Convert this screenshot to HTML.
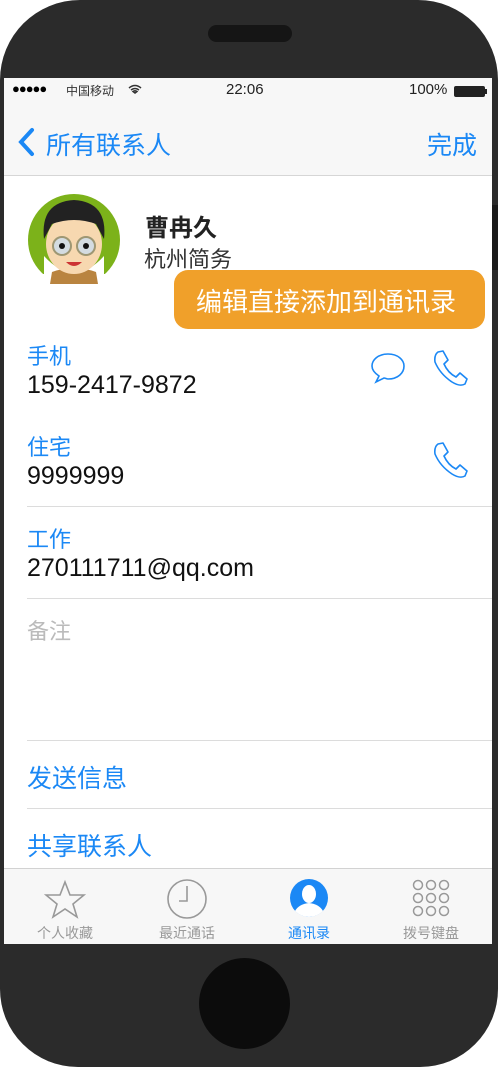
<!DOCTYPE html><html><head><meta charset="utf-8"><style>
*{margin:0;padding:0;box-sizing:border-box}
body{width:498px;height:1067px;background:#fff;position:relative;overflow:hidden;font-family:"Liberation Sans","Noto Sans CJK SC",sans-serif}
.phone{position:absolute;left:0;top:0;width:498px;height:1067px;background:#2b2b2b;border-radius:80px 80px 78px 78px}
.side{position:absolute;right:0;top:205px;width:6px;height:65px;background:#1a1a1a}
.spk{position:absolute;left:208px;top:25px;width:84px;height:17px;border-radius:9px;background:#151515}
.home{position:absolute;left:199px;top:958px;width:91px;height:91px;border-radius:50%;background:#0c0c0c}
.screen{position:absolute;left:4px;top:78px;width:488px;height:866px;background:#fff;overflow:hidden}
.t{position:absolute;white-space:nowrap}
.sb{top:0;height:98px;width:100%;background:#f7f7f7;border-bottom:1px solid #d6d6d6;position:absolute}
.blue{color:#1b88f5}
.sep{position:absolute;left:23px;right:0;height:1px;background:#dcdcdc}
.tab{position:absolute;left:0;top:790px;width:488px;height:76px;background:#f7f7f7;border-top:1px solid #d2d2d2}
.tl{position:absolute;top:54px;font-size:14px;color:#999;width:122px;text-align:center}
.num{font-size:25px;color:#111}
</style></head><body>
<div class="phone"></div><div class="side"></div><div class="spk"></div><div class="home"></div>
<div class="screen">
<div class="sb">
<div class="t" style="left:8px;top:3px;font-size:13px;letter-spacing:-1px">●●●●●</div>
<div class="t" style="left:62px;top:4px;font-size:12px;color:#333">中国移动</div>
<svg style="position:absolute;left:124px;top:6px" width="14" height="10"><path d="M1 4 Q7 -1 13 4 M3 6 Q7 3 11 6 M7 9 L5 7.5 Q7 6 9 7.5Z" stroke="#333" stroke-width="1.5" fill="none"/></svg>
<div class="t" style="left:222px;top:3px;font-size:15px;color:#222">22:06</div>
<div class="t" style="left:405px;top:3px;font-size:15px;color:#222">100%</div>
<div style="position:absolute;left:450px;top:8px;width:31px;height:11px;background:#222;border-radius:2px"></div>
<div style="position:absolute;left:481px;top:11px;width:2px;height:5px;background:#222"></div>
<svg style="position:absolute;left:12px;top:49px" width="20" height="30"><path d="M16 3 L5 15 L16 27" stroke="#1b88f5" stroke-width="4" fill="none" stroke-linecap="round"/></svg>
<div class="t blue" style="left:42px;top:48px;font-size:25px">所有联系人</div>
<div class="t blue" style="left:423px;top:48px;font-size:25px">完成</div>
</div>
<svg style="position:absolute;left:22px;top:116px" width="96" height="90" viewBox="0 0 96 90">
<circle cx="48" cy="46" r="46" fill="#7cb21a"/>
<rect x="0" y="80" width="96" height="10" fill="#fff"/>
<path d="M18 62 Q48 95 78 62 L78 90 L18 90Z" fill="#fff"/>
<path d="M26 78 Q48 70 70 78 L72 90 L24 90Z" fill="#b98440"/>
<ellipse cx="48" cy="50" rx="28" ry="30" fill="#f7d8b0"/>
<path d="M18 45 Q14 8 48 6 Q82 8 78 45 L70 30 Q48 22 26 30Z" fill="#222"/>
<circle cx="36" cy="52" r="9" fill="#cde" stroke="#886" stroke-width="2" opacity=".8"/>
<circle cx="60" cy="52" r="9" fill="#cde" stroke="#886" stroke-width="2" opacity=".8"/>
<circle cx="36" cy="52" r="3" fill="#111"/><circle cx="60" cy="52" r="3" fill="#111"/>
<path d="M40 68 Q48 76 56 68Z" fill="#c33"/>
</svg>
<div class="t" style="left:141px;top:130px;font-size:24px;font-weight:bold;color:#222">曹冉久</div>
<div class="t" style="left:140px;top:164px;font-size:22px;color:#333">杭州简务</div>
<div style="position:absolute;left:170px;top:192px;width:311px;height:59px;border-radius:14px;background:#f0a02a"></div>
<div class="t" style="left:192px;top:204px;font-size:26px;color:#fff">编辑直接添加到通讯录</div>
<div class="t blue" style="left:23px;top:261px;font-size:22px">手机</div>
<div class="t num" style="left:23px;top:293px">159-2417-9872</div>
<svg style="position:absolute;left:366px;top:273px" width="36" height="34"><path d="M18 3 C8 3 2 9 2 15 C2 20 6 23 9 25 L6 31 L14 27 C15 27 17 28 18 28 C28 28 34 22 34 15 C34 9 28 3 18 3Z" fill="none" stroke="#1b88f5" stroke-width="1.6"/></svg>
<svg style="position:absolute;left:428px;top:271px" width="36" height="38"><path d="M6 3 L11 2 L16 11 L12 15 Q16 24 24 28 L28 24 L35 30 L33 35 Q28 38 20 33 Q8 25 3 13 Q2 6 6 3Z" fill="none" stroke="#1b88f5" stroke-width="1.6" stroke-linejoin="round"/></svg>
<div class="t blue" style="left:23px;top:352px;font-size:22px">住宅</div>
<div class="t num" style="left:23px;top:384px">9999999</div>
<svg style="position:absolute;left:428px;top:363px" width="36" height="38"><path d="M6 3 L11 2 L16 11 L12 15 Q16 24 24 28 L28 24 L35 30 L33 35 Q28 38 20 33 Q8 25 3 13 Q2 6 6 3Z" fill="none" stroke="#1b88f5" stroke-width="1.6" stroke-linejoin="round"/></svg>
<div class="sep" style="top:428px"></div>
<div class="t blue" style="left:23px;top:444px;font-size:22px">工作</div>
<div class="t num" style="left:23px;top:476px">270111711@qq.com</div>
<div class="sep" style="top:520px"></div>
<div class="t" style="left:23px;top:536px;font-size:22px;color:#bbb">备注</div>
<div class="sep" style="top:662px"></div>
<div class="t blue" style="left:23px;top:681px;font-size:25px">发送信息</div>
<div class="sep" style="top:730px"></div>
<div class="t blue" style="left:23px;top:749px;font-size:25px">共享联系人</div>
<div class="tab">
<svg style="position:absolute;left:40px;top:10px" width="42" height="40"><path d="M21 3 L26 16 L40 16 L29 25 L33 38 L21 30 L9 38 L13 25 L2 16 L16 16Z" fill="none" stroke="#999" stroke-width="1.6"/></svg>
<div class="tl" style="left:0">个人收藏</div>
<svg style="position:absolute;left:162px;top:9px" width="42" height="42"><circle cx="21" cy="21" r="19" fill="none" stroke="#999" stroke-width="1.6"/><path d="M21 8 V23 H13" fill="none" stroke="#999" stroke-width="1.6"/></svg>
<div class="tl" style="left:122px">最近通话</div>
<svg style="position:absolute;left:285px;top:9px" width="40" height="40"><circle cx="20" cy="20" r="19" fill="#1b88f5"/><ellipse cx="20" cy="16" rx="7" ry="9" fill="#fff"/><path d="M6 33 Q10 26 20 25 Q30 26 34 33 Q28 39 20 39 Q12 39 6 33Z" fill="#fff"/></svg>
<div class="tl" style="left:244px;color:#1b88f5">通讯录</div>
<svg style="position:absolute;left:408px;top:10px" width="38" height="38"><g fill="none" stroke="#999" stroke-width="1.5"><circle cx="6" cy="6" r="4.5"/><circle cx="19" cy="6" r="4.5"/><circle cx="32" cy="6" r="4.5"/><circle cx="6" cy="19" r="4.5"/><circle cx="19" cy="19" r="4.5"/><circle cx="32" cy="19" r="4.5"/><circle cx="6" cy="32" r="4.5"/><circle cx="19" cy="32" r="4.5"/><circle cx="32" cy="32" r="4.5"/></g></svg>
<div class="tl" style="left:366px">拨号键盘</div>
</div>
</div>
</body></html>
